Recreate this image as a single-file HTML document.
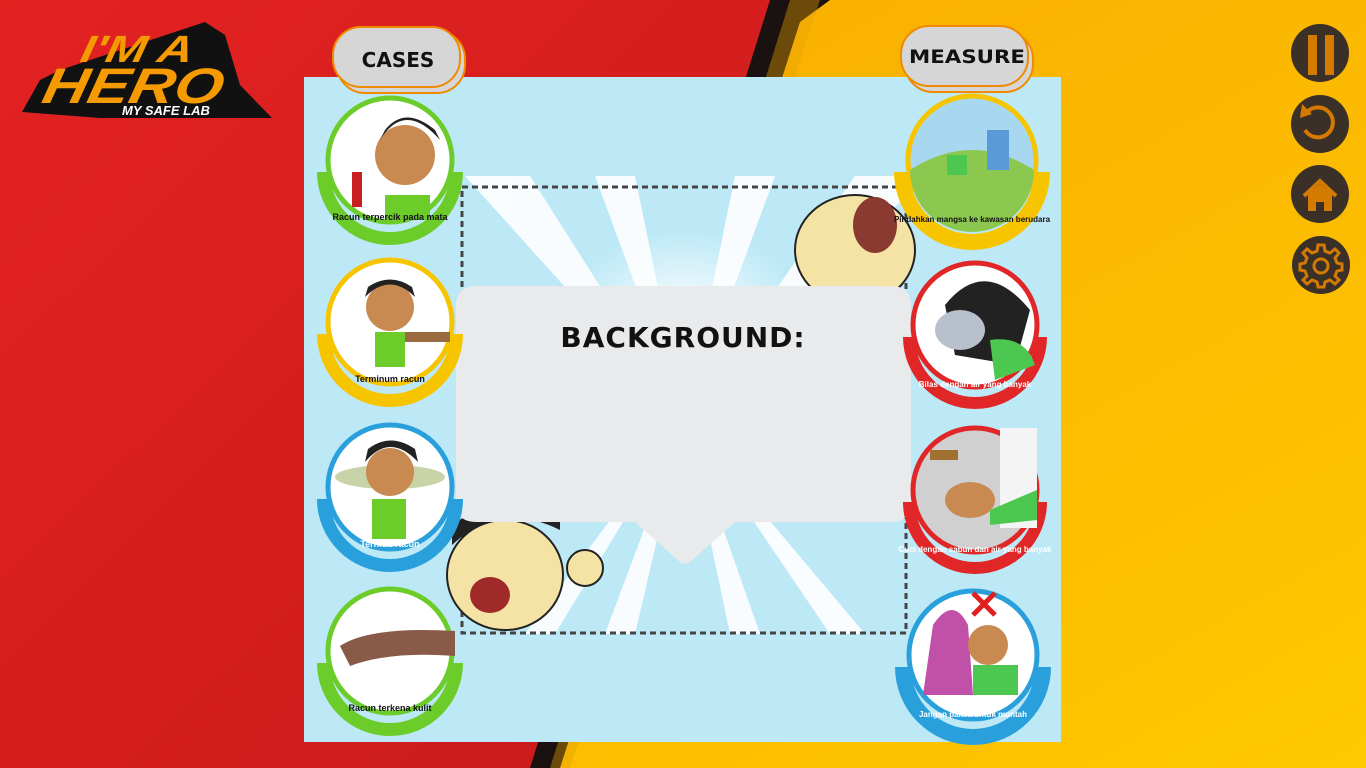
<!DOCTYPE html>
<html><head><meta charset="utf-8"><style>
html,body{margin:0;padding:0;width:1366px;height:768px;overflow:hidden;font-family:"Liberation Sans",sans-serif}
</style></head><body>
<svg width="1366" height="768" viewBox="0 0 1366 768" xmlns="http://www.w3.org/2000/svg">
<defs>
<linearGradient id="red" x1="0" y1="0" x2="1" y2="1"><stop offset="0" stop-color="#e32222"/><stop offset="1" stop-color="#c81a1a"/></linearGradient>
<linearGradient id="yel" x1="0" y1="0" x2="1" y2="1"><stop offset="0" stop-color="#f6a800"/><stop offset="1" stop-color="#ffc800"/></linearGradient>
<clipPath id="raysclip"><rect x="461" y="176" width="446" height="458"/></clipPath>
<radialGradient id="glow" cx="0.5" cy="0.5" r="0.5"><stop offset="0" stop-color="#fff"/><stop offset="1" stop-color="#fff" stop-opacity="0"/></radialGradient>
</defs>
<rect width="1366" height="768" fill="url(#yel)"/>
<polygon points="0,0 780,0 560,768 0,768" fill="url(#red)"/>
<polygon points="770,0 830,0 800,22 560,768 530,768" fill="#1a1210"/>
<polygon points="790,0 820,0 570,768 550,768" fill="#e8a000" opacity="0.4"/>
<!-- logo -->
<g>
<polygon points="40,80 60,70 205,22 225,35 240,85 272,118 100,118 22,112" fill="#111"/>
<text x="92" y="62" font-family="Liberation Sans" font-weight="bold" font-style="italic" font-size="38" fill="#f59a00" transform="skewX(-12)" textLength="112" lengthAdjust="spacingAndGlyphs">I'M A</text>
<text x="62" y="103" font-family="Liberation Sans" font-weight="bold" font-style="italic" font-size="50" fill="#f59a00" transform="skewX(-12)" textLength="180" lengthAdjust="spacingAndGlyphs">HERO</text>
<text x="122" y="115" font-family="Liberation Sans" font-weight="bold" font-style="italic" font-size="13" fill="#fff">MY SAFE LAB</text>
</g>
<!-- panel -->
<rect x="304" y="77" width="757" height="665" fill="#bde9f7"/>
<g clip-path="url(#raysclip)" fill="#fff" opacity="0.9">
<polygon points="685,420 465,176 530,176"/>
<polygon points="685,420 595,176 635,176"/>
<polygon points="685,420 735,176 775,176"/>
<polygon points="685,420 855,176 907,176 907,195"/>
<polygon points="685,420 525,634 555,634"/>
<polygon points="685,420 605,634 635,634"/>
<polygon points="685,420 730,634 760,634"/>
<polygon points="685,420 830,634 865,634"/>
</g>
<ellipse cx="685" cy="320" rx="120" ry="90" fill="url(#glow)"/>
<rect x="462" y="187" width="444" height="446" fill="none" stroke="#444" stroke-width="3" stroke-dasharray="6,4"/>
<!-- characters approx -->
<ellipse cx="855" cy="250" rx="60" ry="55" fill="#f5e3a6" stroke="#222" stroke-width="2"/>
<ellipse cx="875" cy="225" rx="22" ry="28" fill="#8a3a30"/>
<ellipse cx="505" cy="575" rx="58" ry="55" fill="#f5e3a6" stroke="#222" stroke-width="2"/>
<path d="M452,545 Q500,500 560,530 L560,520 Q500,490 452,525Z" fill="#222"/>
<ellipse cx="490" cy="595" rx="20" ry="18" fill="#a02a2a"/>
<circle cx="585" cy="568" r="18" fill="#f5e3a6" stroke="#222" stroke-width="2"/>
<!-- bubble -->
<path d="M476,286 H891 Q911,286 911,306 V502 Q911,522 891,522 H735 L690,562 Q685,566 680,562 L635,522 H476 Q456,522 456,502 V306 Q456,286 476,286Z" fill="#e9eaec"/>
<text x="683" y="347" text-anchor="middle" font-family="DejaVu Sans" font-weight="bold" font-size="28" fill="#111" letter-spacing="1">BACKGROUND:</text>
<!-- badges -->
<g font-family="Liberation Sans" font-weight="bold" font-size="9" fill="#111">
<g transform="translate(390,160)"><path d="M-73,12 A73,73 0 0 0 73,12 L60,12 A60,60 0 0 1 -60,12Z" fill="#6ccc2a"/><circle r="62" fill="#fff" stroke="#6ccc2a" stroke-width="5"/><circle cx="15" cy="-5" r="30" fill="#c88a50"/><path d="M-10,-20 Q15,-60 50,-20 L45,-30 Q15,-55 -5,-30Z" fill="#222"/><rect x="-5" y="35" width="45" height="25" fill="#6ccc2a"/><rect x="-38" y="12" width="10" height="35" fill="#c82020"/><text x="0" y="60" text-anchor="middle" font-size="9">Racun terpercik pada mata</text></g>
<g transform="translate(390,322)"><path d="M-73,12 A73,73 0 0 0 73,12 L60,12 A60,60 0 0 1 -60,12Z" fill="#f7c500"/><circle r="62" fill="#fff" stroke="#f7c500" stroke-width="5"/><circle cx="0" cy="-15" r="24" fill="#c88a50"/><path d="M-25,-25 Q0,-50 25,-25 L22,-35 Q0,-50 -22,-35Z" fill="#222"/><rect x="-15" y="10" width="30" height="35" fill="#6ccc2a"/><rect x="15" y="10" width="45" height="10" fill="#9a6a40"/><text x="0" y="60" text-anchor="middle">Terminum racun</text></g>
<g transform="translate(390,487)"><path d="M-73,12 A73,73 0 0 0 73,12 L60,12 A60,60 0 0 1 -60,12Z" fill="#29a0dc"/><circle r="62" fill="#fff" stroke="#29a0dc" stroke-width="5"/><ellipse cx="0" cy="-10" rx="55" ry="12" fill="#c8d4a8"/><circle cx="0" cy="-15" r="24" fill="#c88a50"/><path d="M-25,-25 Q0,-55 28,-25 L25,-38 Q0,-55 -22,-38Z" fill="#222"/><rect x="-18" y="12" width="34" height="40" fill="#6ccc2a"/><text x="0" y="60" text-anchor="middle" fill="#fff">Terhidu racun</text></g>
<g transform="translate(390,651)"><path d="M-73,12 A73,73 0 0 0 73,12 L60,12 A60,60 0 0 1 -60,12Z" fill="#6ccc2a"/><circle r="62" fill="#fff" stroke="#6ccc2a" stroke-width="5"/><path d="M-50,-5 Q-20,-25 65,-20 L65,5 Q0,0 -40,15Z" fill="#8a5a48"/><text x="0" y="60" text-anchor="middle">Racun terkena kulit</text></g>
<g transform="translate(972,160)"><path d="M-78,12 A78,78 0 0 0 78,12 L62,12 A62,62 0 0 1 -62,12Z" fill="#f7c500"/><circle r="64" fill="#a8d8f0" stroke="#f7c500" stroke-width="5"/><path d="M-62,10 Q0,-30 62,10 A62,62 0 0 1 -62,10Z" fill="#8cc850"/><rect x="15" y="-30" width="22" height="40" fill="#5a9ad8"/><rect x="-25" y="-5" width="20" height="20" fill="#4cc850"/><text x="0" y="62" text-anchor="middle" font-size="8">Pindahkan mangsa ke kawasan berudara</text></g>
<g transform="translate(975,325)"><path d="M-72,12 A72,72 0 0 0 72,12 L60,12 A60,60 0 0 1 -60,12Z" fill="#e02626"/><circle r="62" fill="#fff" stroke="#e02626" stroke-width="5"/><path d="M-30,-20 Q10,-70 55,-15 L40,40 L-20,30Z" fill="#222"/><ellipse cx="-15" cy="5" rx="25" ry="20" fill="#b8c0cc"/><path d="M15,15 Q50,10 60,40 L20,55Z" fill="#4cc850"/><text x="0" y="62" text-anchor="middle" font-size="8" fill="#fff">Bilas dengan air yang banyak</text></g>
<g transform="translate(975,490)"><path d="M-72,12 A72,72 0 0 0 72,12 L60,12 A60,60 0 0 1 -60,12Z" fill="#e02626"/><circle r="62" fill="#d0d0d0" stroke="#e02626" stroke-width="5"/><rect x="25" y="-62" width="37" height="100" fill="#f4f4f4"/><rect x="-45" y="-40" width="28" height="10" fill="#a07030"/><ellipse cx="-5" cy="10" rx="25" ry="18" fill="#c88a50"/><path d="M15,20 L62,0 L62,30 L15,35Z" fill="#4cc850"/><text x="0" y="62" text-anchor="middle" font-size="8" fill="#fff">Cuci dengan sabun dan air yang banyak</text></g>
<g transform="translate(973,655)"><path d="M-78,12 A78,78 0 0 0 78,12 L62,12 A62,62 0 0 1 -62,12Z" fill="#29a0dc"/><circle r="64" fill="#fff" stroke="#29a0dc" stroke-width="5"/><path d="M-40,-30 Q-20,-60 -5,-30 L0,40 L-50,40Z" fill="#c050a8"/><circle cx="15" cy="-10" r="20" fill="#c88a50"/><rect x="0" y="10" width="45" height="30" fill="#4cc850"/><path d="M0,-62 L22,-40 M22,-62 L0,-40" stroke="#e02020" stroke-width="5"/><text x="0" y="62" text-anchor="middle" font-size="8" fill="#fff">Jangan paksa untuk muntah</text></g>
</g>
<!-- tab buttons -->
<rect x="337" y="31" width="128" height="62" rx="28" fill="#d6d6d6" stroke="#f08a00" stroke-width="2"/>
<rect x="333" y="27" width="127" height="60" rx="28" fill="#d6d6d6" stroke="#f08a00" stroke-width="2"/>
<text x="398" y="67" text-anchor="middle" font-family="DejaVu Sans" font-weight="bold" font-size="20" fill="#111">CASES</text>
<rect x="905" y="31" width="128" height="61" rx="28" fill="#d6d6d6" stroke="#f08a00" stroke-width="2"/>
<rect x="901" y="26" width="127" height="60" rx="28" fill="#d6d6d6" stroke="#f08a00" stroke-width="2"/>
<text x="967" y="63" text-anchor="middle" font-family="DejaVu Sans" font-weight="bold" font-size="19" fill="#111" textLength="116" lengthAdjust="spacingAndGlyphs">MEASURE</text>
<!-- right icons -->
<g fill="#3a3028">
<circle cx="1320" cy="53" r="29"/><circle cx="1320" cy="124" r="29"/><circle cx="1320" cy="194" r="29"/><circle cx="1321" cy="265" r="29"/>
</g>
<rect x="1308" y="35" width="9" height="40" fill="#d47a00"/><rect x="1325" y="35" width="9" height="40" fill="#d47a00"/>
<path d="M1307,112 A15,15 0 1 1 1305,130" fill="none" stroke="#d47a00" stroke-width="4"/>
<polygon points="1302,104 1312,114 1300,118" fill="#d47a00"/>
<path d="M1304,196 L1320,181 L1336,196" fill="none" stroke="#d47a00" stroke-width="4"/>
<path d="M1308,194 V211 H1316 V202 H1324 V211 H1332 V194 L1320,184Z" fill="#d47a00"/>
<g transform="translate(1321,265)" fill="none" stroke="#d47a00" stroke-width="3">
<path d="M-3,-20 H3 L4,-14 L9,-12 L14,-16 L18,-12 L14,-7 L16,-2 L21,-1 V5 L16,6 L14,11 L18,15 L14,19 L9,15 L4,17 L3,22 H-3 L-4,17 L-9,15 L-14,19 L-18,15 L-14,11 L-16,6 L-21,5 V-1 L-16,-2 L-14,-7 L-18,-12 L-14,-16 L-9,-12 L-4,-14Z"/>
<circle cx="0" cy="1" r="7"/>
</g>
</svg>
</body></html>
